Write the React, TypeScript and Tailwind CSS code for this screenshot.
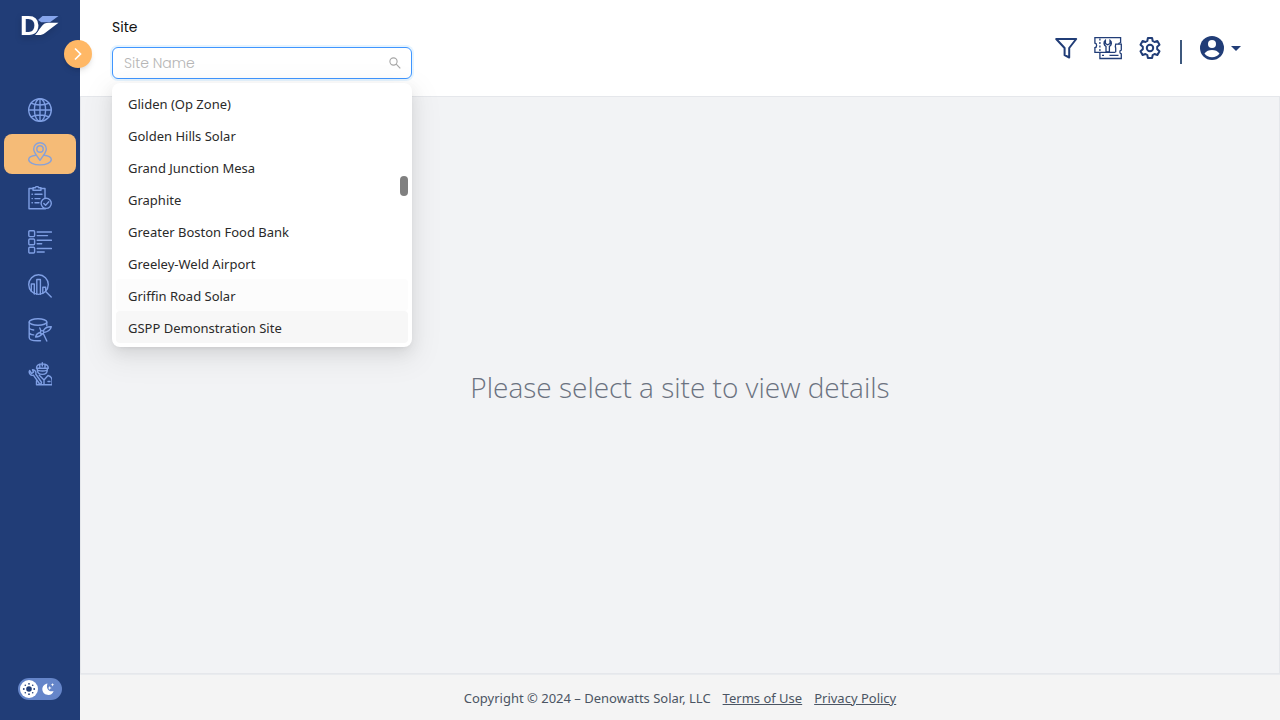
import React from "react";

const sites = [
  "Gliden (Op Zone)",
  "Golden Hills Solar",
  "Grand Junction Mesa",
  "Graphite",
  "Greater Boston Food Bank",
  "Greeley-Weld Airport",
  "Griffin Road Solar",
  "GSPP Demonstration Site",
];

type IconProps = { children: React.ReactNode };

function LineIcon({ children }: IconProps) {
  return (
    <svg
      className="size-6"
      viewBox="0 0 24 24"
      fill="none"
      stroke="currentColor"
      strokeWidth="1.4"
      strokeLinecap="round"
      strokeLinejoin="round"
      aria-hidden="true"
    >
      {children}
    </svg>
  );
}

const navItems = [
  {
    label: "Map",
    icon: (
      <LineIcon>
        <circle cx="12" cy="12" r="11.3" />
        <ellipse cx="12" cy="12" rx="5.6" ry="11.3" />
        <path d="M12 .7v22.6M.7 12h22.6M3 5.2c5 2.4 13 2.4 18 0M3 18.8c5-2.4 13-2.4 18 0" />
      </LineIcon>
    ),
  },
  {
    label: "Site",
    active: true,
    icon: (
      <LineIcon>
        <path d="M12 18.3C9.200 14.200 5.700 10.700 5.700 7a6.300 6.300 0 0 1 12.600 0c0 3.700-3.500 7.200-6.300 11.300z" />
        <circle cx="12" cy="7" r="3.200" />
        <path d="M7.800 13.200C3.500 13.800.7 15.400.7 17.500c0 3 5.100 5.400 11.300 5.400s11.300-2.400 11.300-5.400c0-2.100-2.800-3.700-7.100-4.300" />
      </LineIcon>
    ),
  },
  {
    label: "Tasks",
    icon: (
      <LineIcon>
        <path d="M5 2.500H1v20.300h16.500M13 2.500h4v9.200" />
        <path d="M5 1.800h2.200C7.600.2 10.400.2 10.800 1.800H13v2.500H5z" />
        <path d="M4 8.300h.4M4 12.600h.4M4 16.800h.4M7 8.300h7M7 12.600h5M7 16.800h4" />
        <circle cx="18.200" cy="17.300" r="5.100" />
        <path d="m15.800 17.500 1.800 1.800 3.200-3.600" />
      </LineIcon>
    ),
  },
  {
    label: "Lists",
    icon: (
      <LineIcon>
        <rect x=".8" y=".8" width="5.800" height="5.800" rx="1" />
        <rect x=".8" y="9" width="5.800" height="5.800" rx="1" />
        <rect x=".8" y="17.200" width="5.800" height="5.800" rx="1" />
        <path d="M9.200 2h14.200M9.200 5.600h10.300M9.200 10.200h14.200M9.200 13.800h4.500M9.200 18.500h14.200M9.200 22h7" />
      </LineIcon>
    ),
  },
  {
    label: "Analytics",
    icon: (
      <LineIcon>
        <circle cx="10.500" cy="10.600" r="9.800" />
        <path d="m17.700 17.600 5.500 5.400M3.300 17.200V10h3v10M8.800 20.300V5.500h3.600v14.800M14.800 19.300v-6h2.900v4" />
      </LineIcon>
    ),
  },
  {
    label: "Data tools",
    icon: (
      <LineIcon>
        <ellipse cx="10" cy="4" rx="8.800" ry="3.200" />
        <path d="M1.200 4v15.500c0 2 3.300 3.300 8.300 3.300h3M18.800 4v3.700M1.200 9.500c.2 1.300 2.200 2.200 4.500 2.500M1.200 14.700c.2 1.300 2.200 2 4.500 2.200" />
        <circle cx="14" cy="14.300" r="1.700" />
        <path d="M15.300 12.800c1.700-3 4.500-4.300 8-4-.9 3.500-3.500 4.900-7.600 5.700M12.600 14.500c-2.400.3-4.400 1.700-5 4.500 3.200-.2 5.200-1.300 6.400-3M12.800 12.600l-1-2.600M15.500 16l3.300 7" />
      </LineIcon>
    ),
  },
  {
    label: "Maintenance",
    icon: (
      <LineIcon>
        <path d="M8.500 6.200c0-2.800 2-4.300 5.500-4.300s6.300 1.500 6.300 4.300zM11.800 2.200V5M14.300.7V4M17 2.200V5M9.300 6.500v1.200c0 3.200 2.200 4.700 5 4.700s5-1.500 5-4.700V6.500M10 8.300c3.200.9 6 .9 8.800 0" />
        <path d="M1.600 8.500a3.300 3.300 0 0 0 3.800 4.700l5.900 8.300c1.100 1.200 2.700-.1 2-1.500L7.700 12c.8-2-.7-4.300-3.200-4.200l1 2.300-1.900 1.400z" />
        <path d="M11.300 13.200 16 18l4-4.500c2.700.8 4.100 2.400 4.100 5v4.300H8.500v-4M16 18v4.800M20 19.500h2" />
      </LineIcon>
    ),
  },
];

function Logo() {
  return (
    <svg className="h-9 w-11 drop-shadow-md" viewBox="0 0 44 36" role="img" aria-label="Denowatts">
      <path d="M21.500 8h16L29 14.300h-8.700L17 12z" fill="#86a5ec" />
      <path d="M37.500 14.700 24 24.900c-2 1.500-3.500 2-6 2h-4l6.500-8.500c2-2.700 4-3.700 7-3.700z" fill="#fff" />
      <text
        x="-1"
        y="26.500"
        fill="#fff"
        stroke="#213d77"
        strokeWidth="2"
        paintOrder="stroke"
        fontSize="27"
        fontWeight="700"
        fontFamily="Liberation Sans, sans-serif"
      >
        D
      </text>
    </svg>
  );
}

function Sidebar() {
  return (
    <aside className="relative flex w-20 shrink-0 flex-col bg-[#213d77]">
      <a href="#home" className="flex h-[86px] items-start pt-2 pl-[21px]">
        <Logo />
      </a>
      <button
        type="button"
        aria-label="Expand menu"
        className="absolute top-10 -right-3 z-10 flex size-7 items-center justify-center rounded-full bg-[#ffb866] text-white shadow-md"
      >
        <svg className="size-4" viewBox="0 0 16 16" fill="none" stroke="currentColor" strokeWidth="1.7" aria-hidden="true">
          <path d="m5 2.500 5.500 5.500L5 13.500" />
        </svg>
      </button>
      <nav className="flex flex-col gap-1 px-1 pt-1">
        {navItems.map((item) => (
          <a
            key={item.label}
            href="#nav"
            aria-label={item.label}
            className={
              item.active
                ? "flex h-10 items-center justify-center rounded-lg bg-[#f5bb77] text-[#86a1da]"
                : "flex h-10 items-center justify-center rounded-lg text-[#7f9fe4]"
            }
          >
            {item.icon}
          </a>
        ))}
      </nav>
      <div className="mt-auto flex justify-center pb-5">
        <button
          type="button"
          aria-label="Toggle theme"
          className="flex h-[22px] w-11 items-center justify-between rounded-full bg-[#6585c9] px-0.5"
        >
          <span className="flex size-[18px] items-center justify-center rounded-full bg-white text-[#213d77]">
            <svg className="size-4" viewBox="0 0 16 16" fill="currentColor" aria-hidden="true">
              <circle cx="8" cy="8" r="2.800" />
              <circle cx="8" cy="2.800" r=".9" />
              <circle cx="8" cy="13.200" r=".9" />
              <circle cx="2.800" cy="8" r=".9" />
              <circle cx="13.200" cy="8" r=".9" />
              <circle cx="4.300" cy="4.300" r=".8" />
              <circle cx="11.700" cy="4.300" r=".8" />
              <circle cx="4.300" cy="11.700" r=".8" />
              <circle cx="11.700" cy="11.700" r=".8" />
            </svg>
          </span>
          <svg className="mr-1 size-4" viewBox="0 0 16 16" fill="#fff" aria-hidden="true">
            <path d="M7.500 2.500C4.500 3 2.300 5.300 2.300 8.300a5.800 5.800 0 0 0 11.300 1.600C9.500 11.500 5.500 8 7.500 2.500z" />
            <path d="m9.700 5 .6 1.400 1.400.6-1.400.6-.6 1.400L9.100 7.600 7.700 7l1.400-.6zM12.500 2l.5 1.300 1.300.5-1.300.5-.5 1.300-.5-1.300-1.300-.5 1.300-.5z" />
          </svg>
        </button>
      </div>
    </aside>
  );
}

function SiteSelect() {
  return (
    <div className="w-[300px]">
      <label
        htmlFor="site"
        className="block font-[Poppins,Inter,sans-serif] text-sm leading-[22px] text-[#111]"
      >
        Site
      </label>
      <div className="relative mt-[9px]">
        <div className="flex h-8 items-center rounded-md border border-[#4096ff] bg-white pr-2.5 pl-[11px] shadow-[0_0_0_2px_rgba(5,145,255,0.1)]">
          <input
            id="site"
            type="text"
            role="combobox"
            aria-expanded="true"
            aria-controls="site-list"
            placeholder="Site Name"
            className="min-w-0 flex-1 bg-transparent font-[Poppins,Inter,sans-serif] text-sm font-light outline-none placeholder:text-[#b5b5b5]"
          />
          <svg className="size-3" viewBox="0 0 12 12" fill="none" stroke="#a6a6a6" strokeWidth="1.1" aria-hidden="true">
            <circle cx="4.500" cy="4.500" r="3.600" />
            <path d="m7.200 7.200 4.100 4.100" />
          </svg>
        </div>
        <div className="absolute top-full left-0 z-20 mt-1 w-full rounded-lg bg-white p-1 shadow-[0_6px_16px_0_rgba(0,0,0,0.08),0_3px_6px_-4px_rgba(0,0,0,0.12),0_9px_28px_8px_rgba(0,0,0,0.05)]">
          <ul id="site-list" role="listbox" aria-label="Sites">
            {sites.map((site, i) => (
              <li
                key={site}
                role="option"
                aria-selected="false"
                className={
                  i === 7
                    ? "h-8 rounded bg-[#f7f7f7] px-3 pt-1.5 text-[13px] leading-[22px] text-[#2a2a2a]"
                    : i === 6
                      ? "h-8 rounded bg-[#fcfcfc] px-3 pt-1.5 text-[13px] leading-[22px] text-[#2a2a2a]"
                      : "h-8 rounded px-3 pt-1.5 text-[13px] leading-[22px] text-[#2a2a2a]"
                }
              >
                {site}
              </li>
            ))}
          </ul>
          <div className="absolute top-[93px] right-1 h-5 w-2 rounded-full bg-[#808080]" />
        </div>
      </div>
    </div>
  );
}

function HeaderActions() {
  return (
    <div className="flex h-6 items-center text-[#213d77]">
      <button type="button" aria-label="Filter">
        <svg className="size-6" viewBox="0 0 24 24" fill="none" stroke="currentColor" strokeWidth="2" strokeLinejoin="round" aria-hidden="true">
          <path d="M2.200 3h20l-7 9v9.500l-4.600-2.300V12z" />
        </svg>
      </button>
      <button type="button" aria-label="Tickets" className="ml-4">
        <svg className="h-6 w-7" viewBox="0 0 28 24" fill="none" stroke="currentColor" strokeWidth="1.300" aria-hidden="true">
          <path d="M5.200 16.300H.9v-4.700c2.300-.2 2.300-4.100 0-4.400V1.700h25.700v5c-1.600.3-2 .8-2 1.500M5.200 16.300h16.200" />
          <path d="M5.900 2.500v13" strokeDasharray="2 1.500" />
          <path d="M5.900 16.300v6.200h21.400v-4.600c-1.900-.2-1.900-3.700 0-3.900V8.200h-5.600c-.6 2.300-.6 3 0 3.700v4.400M15.500 19.400h9M8 19.400h2" />
          <path d="M11.400 4.300c-2.300 1.900-1.600 5 .6 6.100v5.400h3.400v-5.400c2.200-1.100 2.900-4.200.6-6.100v3.200l-2.300 1.300-2.300-1.300z" />
        </svg>
      </button>
      <button type="button" aria-label="Settings" className="ml-4">
        <svg className="size-6" viewBox="0 0 24 24" fill="none" stroke="currentColor" strokeWidth="2" strokeLinejoin="round" aria-hidden="true">
          <path d="M9.900 2h4.200l.6 3 1.800 1 2.900-1 2.100 3.700-2.300 2v2.600l2.300 2-2.100 3.700-2.900-1-1.800 1-.6 3H9.900l-.6-3-1.800-1-2.900 1-2.100-3.700 2.300-2v-2.600l-2.300-2L4.600 5l2.900 1 1.800-1z" />
          <circle cx="12" cy="12" r="3.200" />
        </svg>
      </button>
      <span className="mt-2 ml-[18px] h-6 w-0.5 bg-[#3d587d]" />
      <button type="button" aria-label="Account" className="ml-[18px] flex items-center gap-[7px]">
        <svg className="size-6" viewBox="0 0 24 24" aria-hidden="true">
          <circle cx="12" cy="12" r="12" fill="currentColor" />
          <circle cx="12" cy="8" r="4" fill="#fff" />
          <path d="M4.500 17.500C6.200 15 9 14 12 14s5.800 1 7.500 3.500A9.300 9.300 0 0 1 12 21.300a9.300 9.300 0 0 1-7.500-3.800z" fill="#fff" />
        </svg>
        <svg className="h-[5px] w-2.5" viewBox="0 0 10 5" fill="currentColor" aria-hidden="true">
          <path d="M0 0h10L5 5z" />
        </svg>
      </button>
    </div>
  );
}

export default function App() {
  return (
    <div className="flex min-h-screen bg-[#f2f3f5] font-['Noto_Sans','Open_Sans',sans-serif]">
      <Sidebar />
      <div className="flex min-w-0 flex-1 flex-col">
        <header className="flex h-24 items-start justify-between bg-white pr-[39px] pl-8">
          <div className="pt-4">
            <SiteSelect />
          </div>
          <div className="pt-9">
            <HeaderActions />
          </div>
        </header>
        <main className="flex flex-1 items-center justify-center border border-[#e5e7eb]">
          <h1 className="pt-1 font-['Open_Sans',sans-serif] text-[28px] leading-9 font-light text-[#6b7280]">
            Please select a site to view details
          </h1>
        </main>
        <footer className="flex h-[46px] items-center justify-center gap-3 border-t border-[#e9ebee] bg-[#f4f4f4] pt-0.5 text-[13px] text-[#4b5563]">
          <span>Copyright © 2024 – Denowatts Solar, LLC</span>
          <a href="#terms" className="underline">
            Terms of Use
          </a>
          <a href="#privacy" className="underline">
            Privacy Policy
          </a>
        </footer>
      </div>
    </div>
  );
}
